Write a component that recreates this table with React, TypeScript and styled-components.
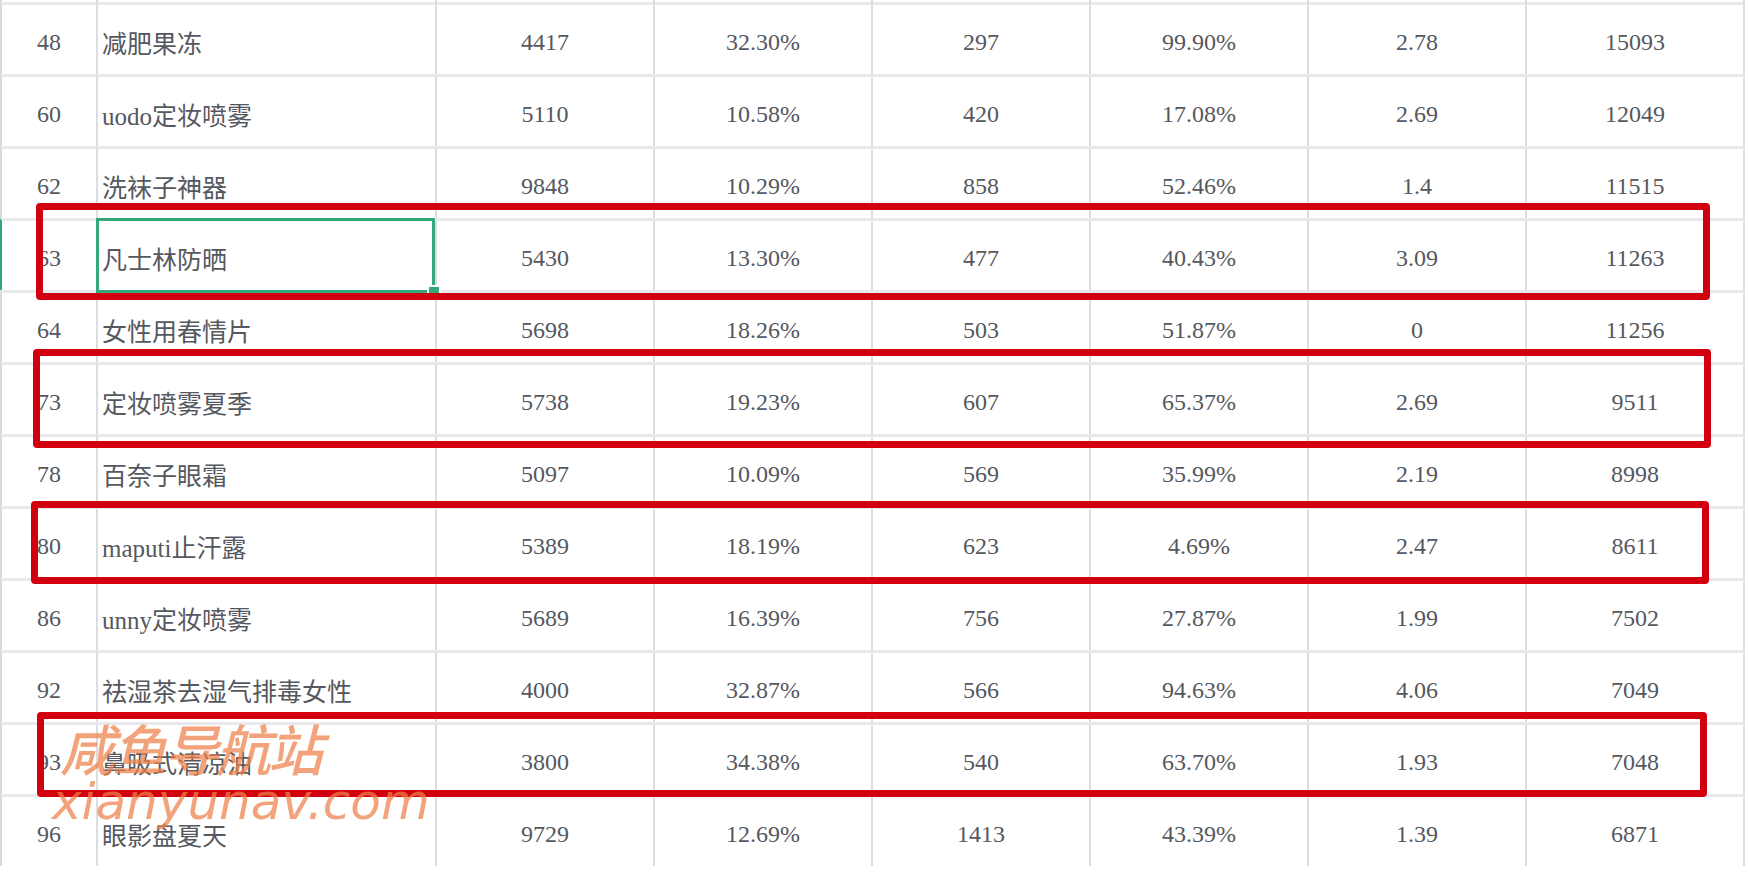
import React from 'react';
import styled, { createGlobalStyle } from 'styled-components';

const GlobalStyle = createGlobalStyle`
    html, body {
        margin: 0;
        padding: 0;
        background: #fff;
    }
    body {
        width: 1748px;
        height: 872px;
        overflow: hidden;
    }
`;

const rows = [
    ['48', '减肥果冻', '4417', '32.30%', '297', '99.90%', '2.78', '15093'],
    ['60', 'uodo定妆喷雾', '5110', '10.58%', '420', '17.08%', '2.69', '12049'],
    ['62', '洗袜子神器', '9848', '10.29%', '858', '52.46%', '1.4', '11515'],
    ['63', '凡士林防晒', '5430', '13.30%', '477', '40.43%', '3.09', '11263'],
    ['64', '女性用春情片', '5698', '18.26%', '503', '51.87%', '0', '11256'],
    ['73', '定妆喷雾夏季', '5738', '19.23%', '607', '65.37%', '2.69', '9511'],
    ['78', '百奈子眼霜', '5097', '10.09%', '569', '35.99%', '2.19', '8998'],
    ['80', 'maputi止汗露', '5389', '18.19%', '623', '4.69%', '2.47', '8611'],
    ['86', 'unny定妆喷雾', '5689', '16.39%', '756', '27.87%', '1.99', '7502'],
    ['92', '祛湿茶去湿气排毒女性', '4000', '32.87%', '566', '94.63%', '4.06', '7049'],
    ['93', '鼻吸式清凉油', '3800', '34.38%', '540', '63.70%', '1.93', '7048'],
    ['96', '眼影盘夏天', '9729', '12.69%', '1413', '43.39%', '1.39', '6871'],
];

// red hand-drawn annotation frames
const marks = [
    { left: 36, top: 203, right: 1710, bottom: 300 },
    { left: 33, top: 349, right: 1711, bottom: 448 },
    { left: 31, top: 501, right: 1709, bottom: 584 },
    { left: 37, top: 712, right: 1707, bottom: 797 },
];

const SELECTED = 3;

const Page = styled.div`
    position: relative;
    width: 1748px;
    height: 872px;
    overflow: hidden;
    background: #fff;
    font-family: 'Liberation Serif', 'Noto Sans CJK SC', serif;
    color: #55585e;
`;

const Sheet = styled.div`
    display: flex;
    flex-direction: column;
    width: 1745px;
`;

const Row = styled.div<{ $stub?: boolean; $active?: boolean }>`
    display: grid;
    grid-template-columns: 96px 339px repeat(6, 218px);
    box-sizing: border-box;
    height: ${(p) => (p.$stub ? '2px' : '72px')};
    border-top: ${(p) => (p.$stub ? 'none' : '3px solid #e8e9ec')};
    border-left: 2px solid ${(p) => (p.$active ? '#2fa874' : '#d9dadf')};
`;

const Cell = styled.div`
    position: relative;
    display: flex;
    align-items: center;
    justify-content: center;
    box-sizing: border-box;
    padding-top: 5px;
    border-right: 2px solid #dcdde2;
    font-size: 24px;
    white-space: nowrap;
`;

const NameCell = styled(Cell)`
    justify-content: flex-start;
    padding-left: 4px;
    font-size: 25px;
`;

const Selection = styled.div`
    position: absolute;
    top: -3px;
    bottom: -3px;
    left: -2px;
    right: 0;
    border: 3px solid #33a97a;
    pointer-events: none;
`;

const Handle = styled.div`
    position: absolute;
    right: -9px;
    bottom: -9px;
    width: 10px;
    height: 10px;
    background: #33a97a;
    border: 2px solid #fff;
`;

const Mark = styled.div<{ $left: number; $top: number; $right: number; $bottom: number }>`
    position: absolute;
    left: ${(p) => p.$left}px;
    top: ${(p) => p.$top}px;
    width: ${(p) => p.$right - p.$left}px;
    height: ${(p) => p.$bottom - p.$top}px;
    box-sizing: border-box;
    border: 7px solid #d2000f;
    border-radius: 4px;
`;

const Watermark = styled.div`
    position: absolute;
    left: 56px;
    top: 720px;
    display: flex;
    flex-direction: column;
    color: rgba(238, 128, 72, 0.72);
    font-style: italic;
    line-height: 1;
    pointer-events: none;
`;

const WatermarkCn = styled.span`
    font-family: 'Noto Sans CJK SC', sans-serif;
    font-size: 55px;
    font-weight: 500;
    letter-spacing: -3px;
    padding-left: 4px;
`;

const WatermarkEn = styled.span`
    font-family: 'DejaVu Sans', sans-serif;
    font-size: 50px;
    margin-top: 2px;
    margin-left: -4px;
`;

const App = () => {
    return (
        <>
            <GlobalStyle />
            <Page>
                <Sheet>
                    <Row $stub>
                        {Array.from({ length: 8 }).map((_, i) => (
                            <Cell key={i} />
                        ))}
                    </Row>
                    {rows.map((r, i) => (
                        <Row key={r[0]} $active={i === SELECTED}>
                            <Cell>{r[0]}</Cell>
                            <NameCell>
                                {r[1]}
                                {i === SELECTED && (
                                    <Selection>
                                        <Handle />
                                    </Selection>
                                )}
                            </NameCell>
                            {r.slice(2).map((v, j) => (
                                <Cell key={j}>{v}</Cell>
                            ))}
                        </Row>
                    ))}
                </Sheet>
                {marks.map((m, i) => (
                    <Mark key={i} $left={m.left} $top={m.top} $right={m.right} $bottom={m.bottom} />
                ))}
                <Watermark>
                    <WatermarkCn>咸鱼导航站</WatermarkCn>
                    <WatermarkEn>xianyunav.com</WatermarkEn>
                </Watermark>
            </Page>
        </>
    );
};

export default App;
